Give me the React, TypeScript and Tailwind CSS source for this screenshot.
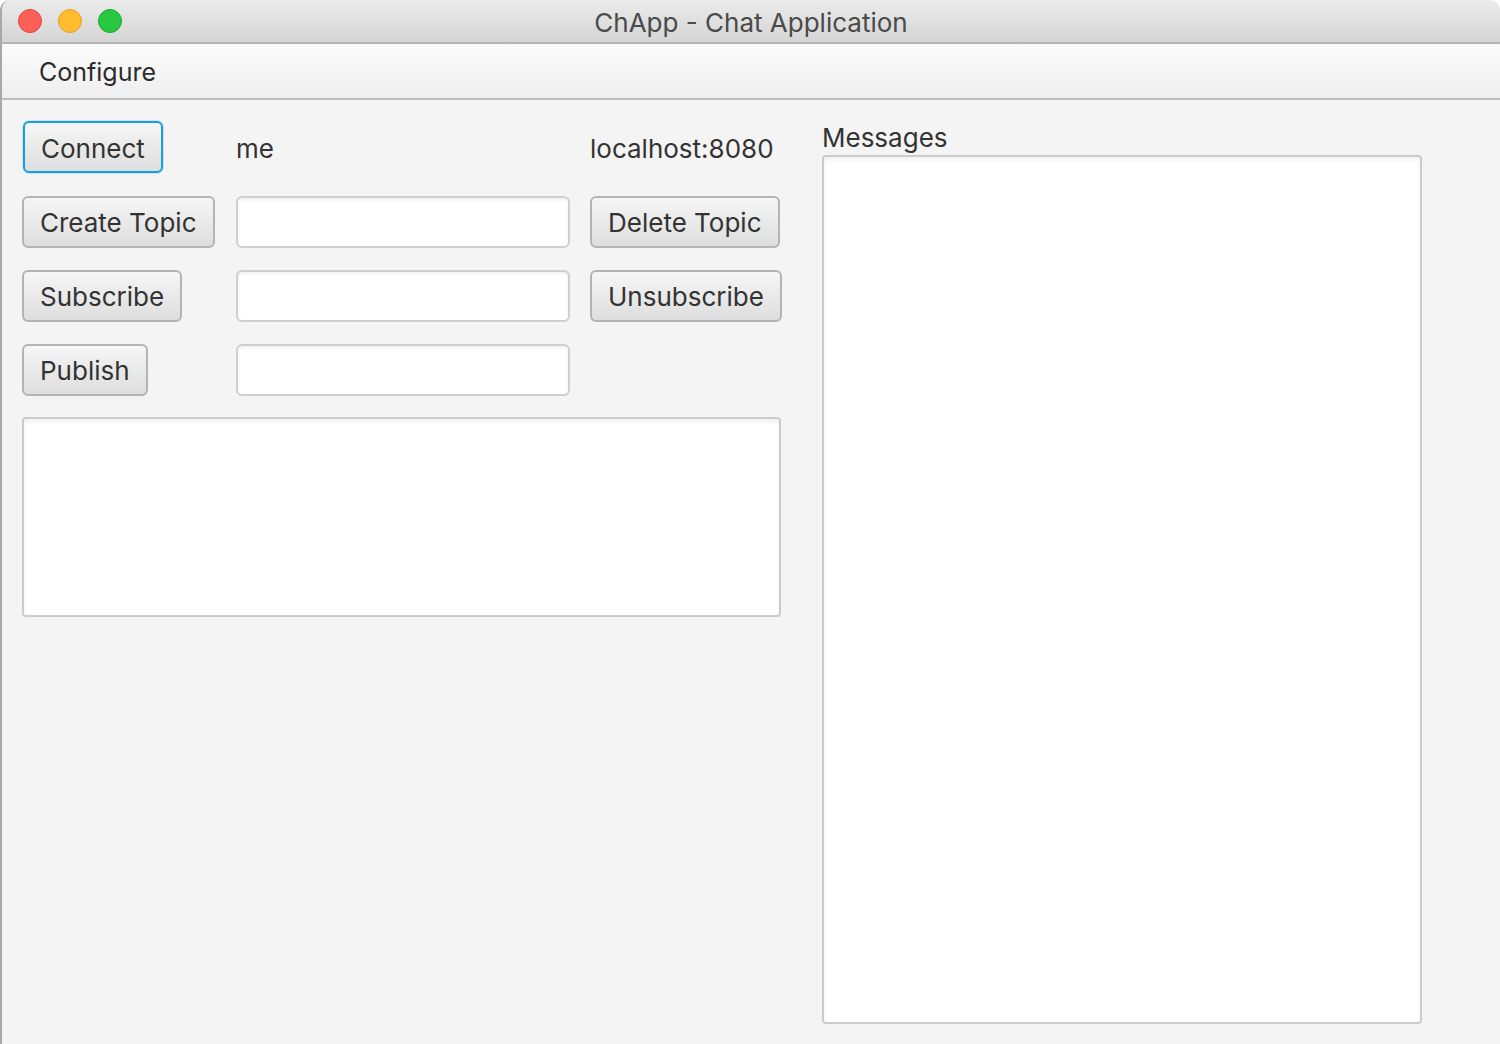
import React from "react";

const font = { fontFamily: '"Helvetica Neue", Inter, "Liberation Sans", sans-serif' };

function Btn({ label, focused = false }: { label: string; focused?: boolean }) {
  if (focused) {
    return (
      <div className="rounded-[7px] bg-[#c6e4f4] p-px">
        <button className="h-[52px] rounded-[6px] border-2 border-[#1a9fd9] bg-gradient-to-b from-[#f6f6f6] to-[#dedede] px-[16px] pt-[2px] text-[26px] text-[#333]">
          {label}
        </button>
      </div>
    );
  }
  return (
    <button className="h-[52px] rounded-[6px] border-2 border-[#b4b4b4] bg-gradient-to-b from-[#f6f6f6] to-[#dedede] px-[16px] pt-[1px] text-[26px] text-[#333]">
      {label}
    </button>
  );
}

function Field() {
  return (
    <div className="h-[52px] w-[334px] rounded-[6px] border-2 border-[#cfcfcf] bg-white shadow-[inset_0_2px_3px_rgba(0,0,0,0.06)]" />
  );
}

export default function App() {
  return (
    <div
      style={font}
      className="flex h-[1044px] w-[1500px] flex-col overflow-hidden rounded-t-[10px] border-l-2 border-[#a8a8a8] bg-[#f4f4f4] text-[#333]"
    >
      {/* title bar */}
      <div className="relative flex h-[44px] shrink-0 items-center justify-center border-b-2 border-[#b4b4b4] bg-gradient-to-b from-[#ebebeb] to-[#d5d5d5] pt-[3px]">
        <div className="absolute left-[16px] top-[9px] flex gap-[16px]">
          <span className="h-[24px] w-[24px] rounded-full border border-[#e0443e] bg-[#fe5f57]" />
          <span className="h-[24px] w-[24px] rounded-full border border-[#dea123] bg-[#febc2e]" />
          <span className="h-[24px] w-[24px] rounded-full border border-[#1aab29] bg-[#28c840]" />
        </div>
        <span className="text-[26px] text-[#4a4a4a]">ChApp - Chat Application</span>
      </div>

      {/* menu bar */}
      <div className="flex h-[56px] shrink-0 items-center border-b-2 border-[#bcbcbc] bg-gradient-to-b from-[#fbfbfb] to-[#efefef] pl-[37px] pt-[4px]">
        <span className="text-[25px] text-[#2b2b2b]">Configure</span>
      </div>

      {/* content */}
      <div className="flex gap-[41px] pl-[20px] pt-[20px]">
        <div className="flex w-[759px] flex-col">
          <div className="grid grid-cols-[194px_334px_191px] gap-x-[20px] gap-y-[22px]">
            <div className="justify-self-start">
              <Btn label="Connect" focused />
            </div>
            <div className="flex items-center pt-[3px] text-[26px]">me</div>
            <div className="flex items-center pt-[3px] text-[26px]">localhost:8080</div>

            <div className="justify-self-start">
              <Btn label="Create Topic" />
            </div>
            <Field />
            <div className="justify-self-start">
              <Btn label="Delete Topic" />
            </div>

            <div className="justify-self-start">
              <Btn label="Subscribe" />
            </div>
            <Field />
            <div className="justify-self-start">
              <Btn label="Unsubscribe" />
            </div>

            <div className="justify-self-start">
              <Btn label="Publish" />
            </div>
            <Field />
            <div />
          </div>
          <div className="mt-[21px] h-[200px] w-[759px] rounded-[4px] border-2 border-[#cbcbcb] bg-white shadow-[inset_0_3px_4px_rgba(0,0,0,0.05)]" />
        </div>

        <div className="flex flex-col pt-[2px]">
          <span className="text-[26px] leading-[32px]">Messages</span>
          <div className="mt-[1px] h-[869px] w-[600px] rounded-[4px] border-2 border-[#cbcbcb] bg-white shadow-[inset_0_3px_4px_rgba(0,0,0,0.05)]" />
        </div>
      </div>
    </div>
  );
}
